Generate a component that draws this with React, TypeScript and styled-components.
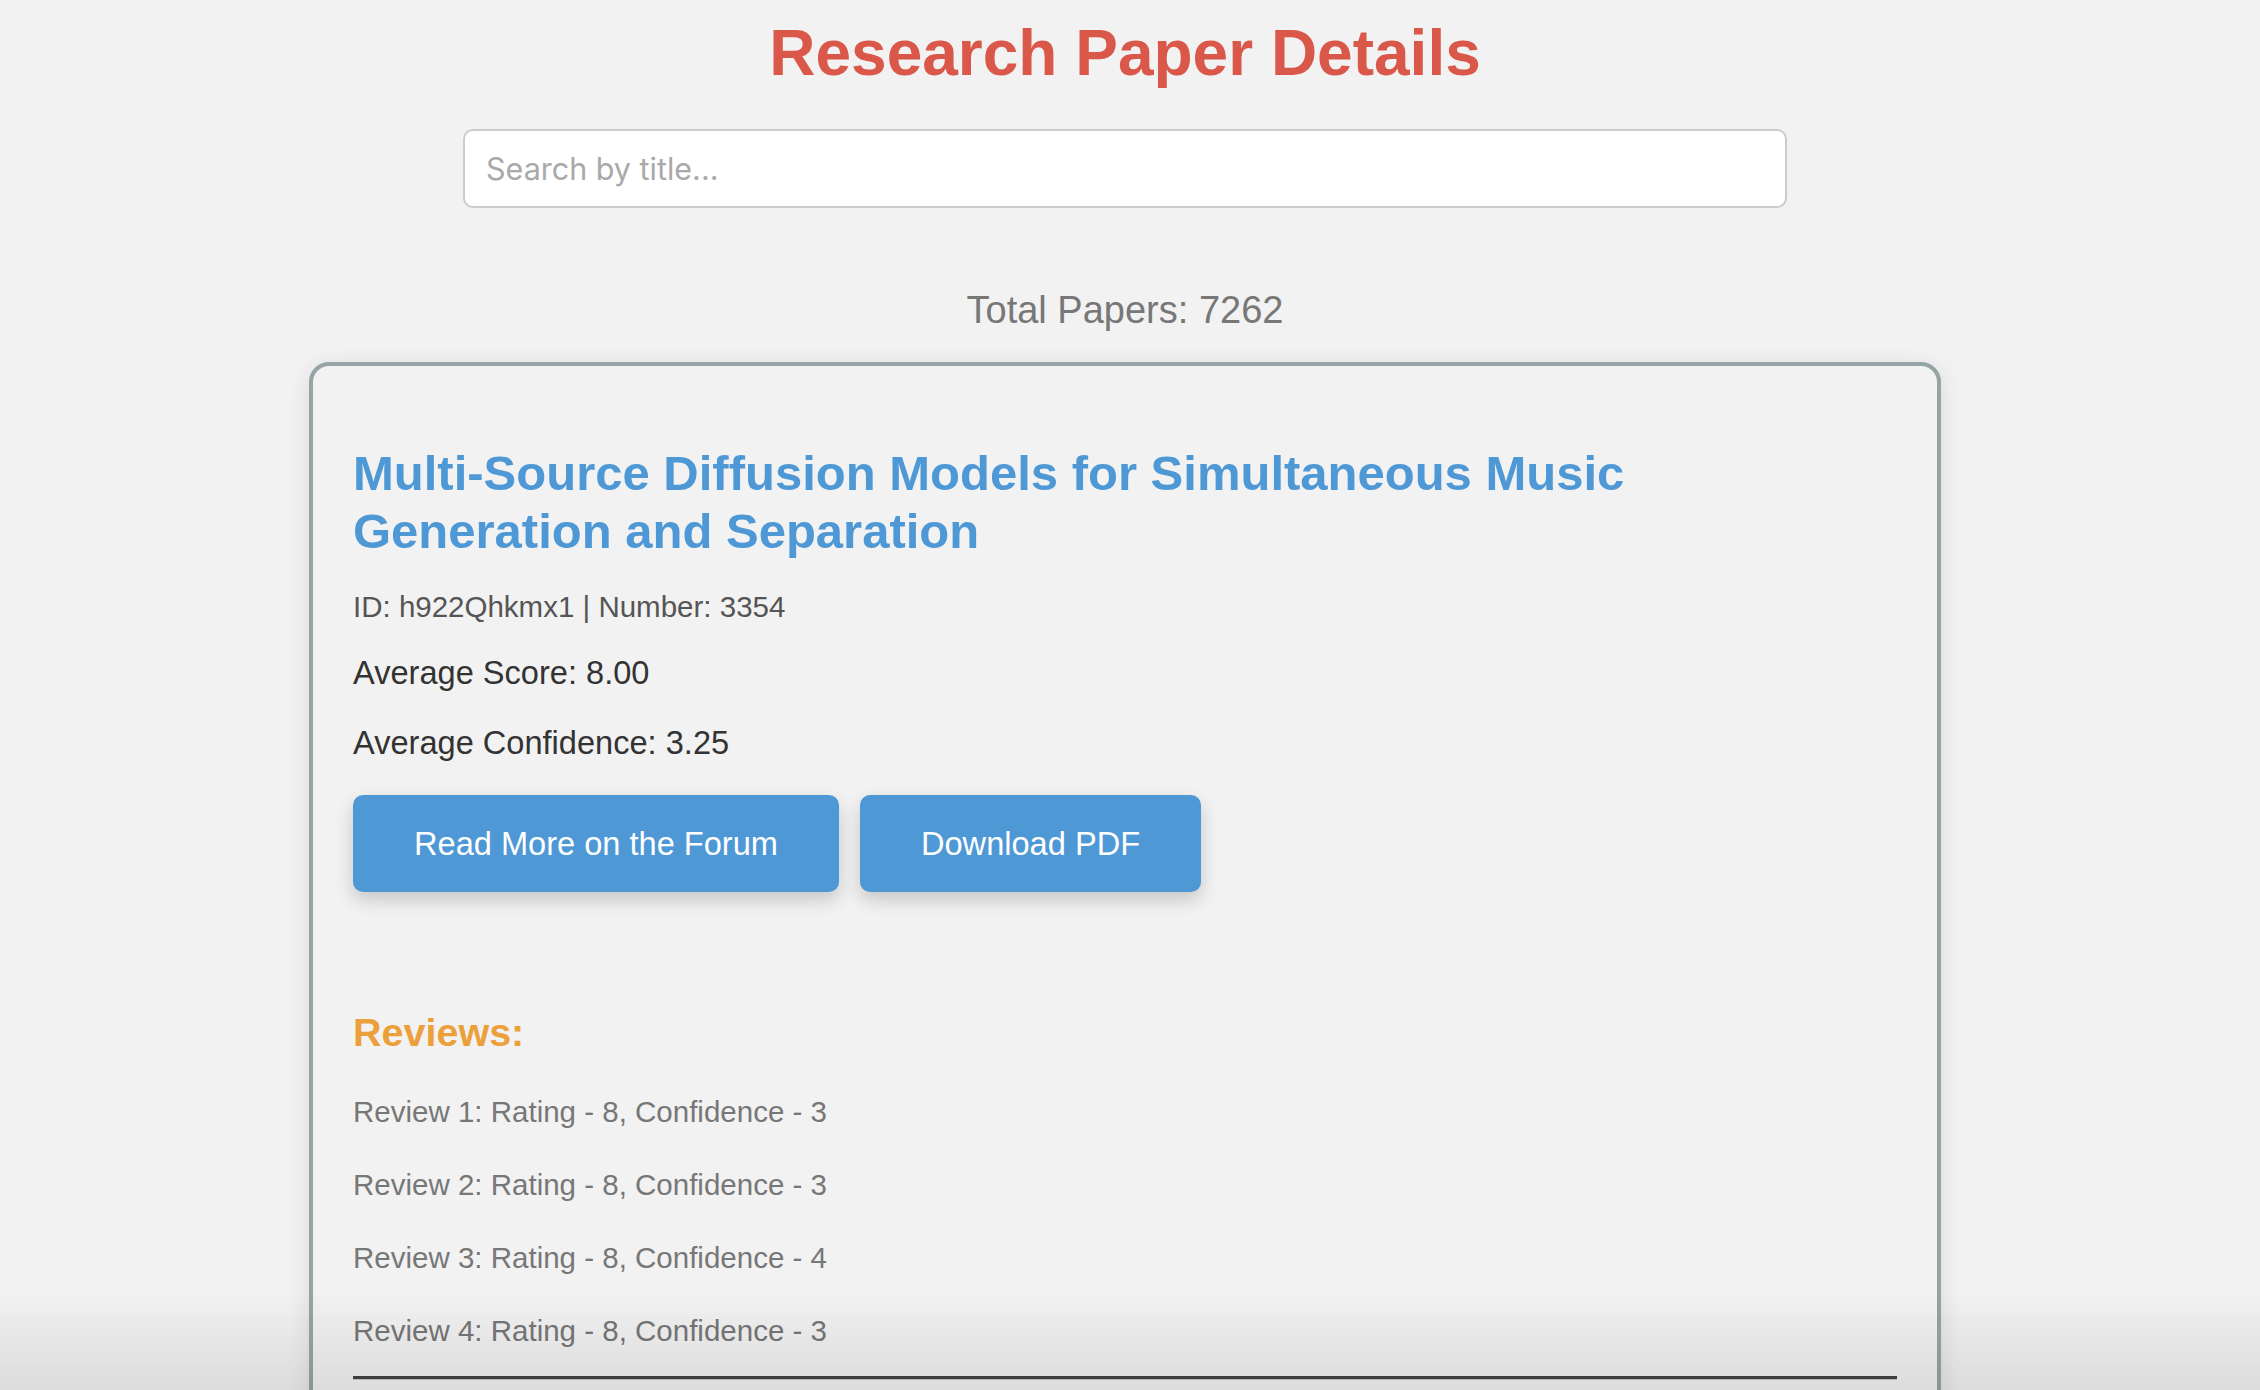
import React from "react";
import styled, { createGlobalStyle } from "styled-components";

const GlobalStyle = createGlobalStyle`
  html, body {
    margin: 0;
    padding: 0;
    height: 1390px;
    overflow: hidden;
    background: #f2f2f2;
    font-family: "Liberation Sans", Arial, Helvetica, sans-serif;
  }
  * { box-sizing: border-box; }
`;

const Page = styled.main`
  width: 2250px;
  display: flex;
  flex-direction: column;
  align-items: center;
  padding-top: 16px;
`;

const PageTitle = styled.h1`
  margin: 0;
  font-size: 64px;
  line-height: 74px;
  font-weight: 700;
  color: #d9584a;
  text-align: center;
`;

const SearchInput = styled.input`
  margin-top: 39px;
  width: 1324px;
  height: 79px;
  border: 2px solid #cccccc;
  border-radius: 10px;
  background: #ffffff;
  padding: 0 21px;
  font-family: Inter, "Open Sans", sans-serif;
  font-size: 30.5px;
  color: #333;
  outline: none;
  &::placeholder {
    color: #a9a9a9;
  }
`;

const TotalCount = styled.div`
  margin-top: 80px;
  font-size: 38px;
  line-height: 44px;
  color: #777777;
  text-align: center;
`;

const Card = styled.section`
  margin-top: 30px;
  width: 1632px;
  border: 4px solid #95a5a6;
  border-radius: 20px;
  padding: 40px;
  background: #f2f2f2;
  box-shadow: 0 4px 22px rgba(0, 0, 0, 0.1);
  display: flex;
  flex-direction: column;
  align-items: flex-start;
`;

const PaperTitle = styled.h2`
  margin: 38px 0 0;
  max-width: 1480px;
  font-size: 49px;
  line-height: 58px;
  font-weight: 700;
  color: #4e98d6;
`;

const Meta = styled.p`
  margin: 30px 0 0;
  font-size: 29.5px;
  line-height: 34px;
  color: #555555;
`;

const Stat = styled.p<{ $gap: number }>`
  margin: ${(p) => p.$gap}px 0 0;
  font-size: 32.6px;
  line-height: 37px;
  color: #333333;
`;

const ButtonRow = styled.div`
  margin-top: 34px;
  display: flex;
  gap: 21px;
`;

const ActionButton = styled.a`
  display: block;
  padding: 30px 61px;
  font-size: 32.6px;
  line-height: 37px;
  color: #ffffff;
  background: #4e98d6;
  border-radius: 10px;
  text-decoration: none;
  box-shadow: 0 8px 18px rgba(0, 0, 0, 0.18);
  cursor: pointer;
`;

const ReviewsHeading = styled.h3`
  margin: 117px 0 0;
  font-size: 39.5px;
  line-height: 46px;
  font-weight: 700;
  color: #eca03c;
`;

const ReviewList = styled.ul`
  list-style: none;
  margin: 40px 0 0;
  padding: 0;
  display: flex;
  flex-direction: column;
  gap: 39px;
`;

const ReviewItem = styled.li`
  font-size: 29.5px;
  line-height: 34px;
  color: #777777;
`;

const Divider = styled.hr`
  align-self: stretch;
  margin: 28px 0 0;
  border: none;
  border-top: 3px solid #444444;
  border-bottom: 1px solid #c8c8c8;
  height: 0;
`;

const BottomShade = styled.div`
  position: fixed;
  left: 0;
  right: 0;
  bottom: 0;
  height: 100px;
  pointer-events: none;
  background: linear-gradient(to bottom, rgba(0, 0, 0, 0), rgba(0, 0, 0, 0.09));
`;

const reviews = [
  { rating: 8, confidence: 3 },
  { rating: 8, confidence: 3 },
  { rating: 8, confidence: 4 },
  { rating: 8, confidence: 3 },
];

export default function App() {
  return (
    <>
      <GlobalStyle />
      <Page>
        <PageTitle>Research Paper Details</PageTitle>
        <SearchInput type="text" placeholder="Search by title..." />
        <TotalCount>Total Papers: 7262</TotalCount>
        <Card>
          <PaperTitle>
            Multi-Source Diffusion Models for Simultaneous Music Generation and Separation
          </PaperTitle>
          <Meta>ID: h922Qhkmx1 | Number: 3354</Meta>
          <Stat $gap={30}>Average Score: 8.00</Stat>
          <Stat $gap={33}>Average Confidence: 3.25</Stat>
          <ButtonRow>
            <ActionButton>Read More on the Forum</ActionButton>
            <ActionButton>Download PDF</ActionButton>
          </ButtonRow>
          <ReviewsHeading>Reviews:</ReviewsHeading>
          <ReviewList>
            {reviews.map((r, i) => (
              <ReviewItem key={i}>
                Review {i + 1}: Rating - {r.rating}, Confidence - {r.confidence}
              </ReviewItem>
            ))}
          </ReviewList>
          <Divider />
        </Card>
      </Page>
      <BottomShade />
    </>
  );
}
